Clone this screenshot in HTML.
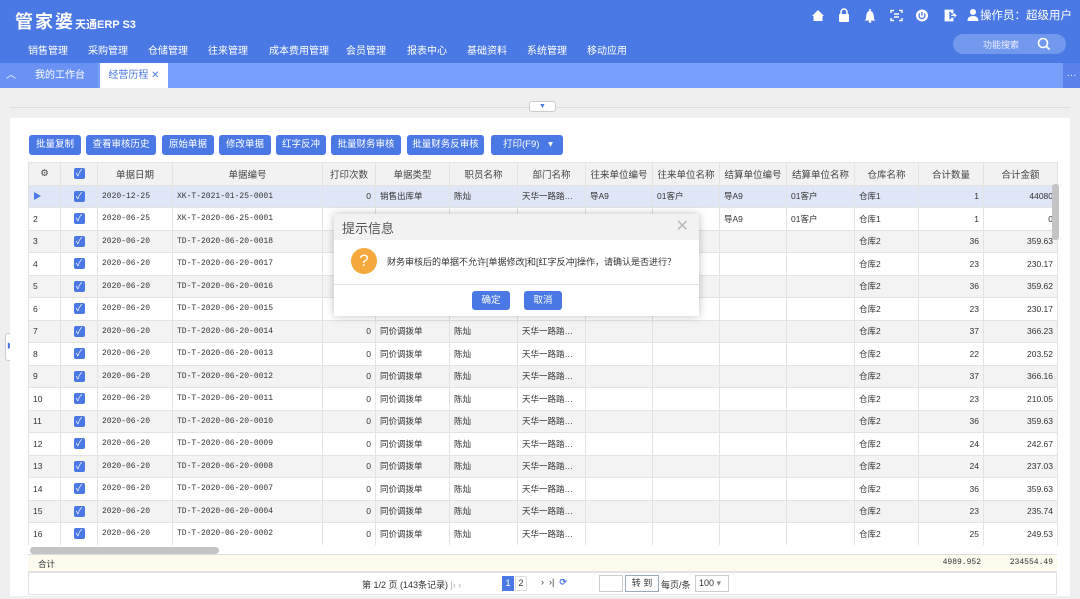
<!DOCTYPE html>
<html><head><meta charset="utf-8"><style>
*{margin:0;padding:0;box-sizing:border-box}
body{width:1080px;height:599px;overflow:hidden;background:#efefef;font-family:"Liberation Sans","Noto Sans CJK SC",sans-serif;font-size:10px;color:#333;position:relative}
.hdr{position:absolute;left:0;top:0;width:1080px;height:63px;background:#4a78e4;color:#fff}
.logo{position:absolute;left:15px;top:8px;font-size:18px;font-weight:bold;letter-spacing:2px}
.logo small{font-size:11px;letter-spacing:0;font-weight:bold}
.nav{position:absolute;top:42px;left:0;font-size:10px}
.nav span{position:absolute;white-space:nowrap}
.search{position:absolute;left:953px;top:34px;width:113px;height:20px;border-radius:10px;background:#7299ee;font-size:9px;color:#eef}
.tabs{position:absolute;top:63px;left:0;width:1080px;height:25px;background:#789ff9}
.tab{position:absolute;top:0;height:25px;line-height:25px;font-size:10px;color:#fff}
.panel{position:absolute;left:10px;top:118px;width:1060px;height:478px;background:#fff}
.btn{position:absolute;top:135px;height:20px;line-height:20px;background:#4a78e4;color:#fff;border-radius:3px;font-size:9.5px;text-align:center}
table{position:absolute;left:28px;top:162px;border-collapse:collapse;table-layout:fixed;width:1029px}
td{height:22.5px;border:1px solid #e3e3e3;padding:0 4px;white-space:nowrap;overflow:hidden;font-size:8.5px;color:#333}
tr.h td{background:#f2f2f2;text-align:center;font-size:9.5px;color:#444}
tr.sel td{background:#dfe6f7}
tr.g td{background:#f3f3f3}
.r{text-align:right}.c{text-align:center}
.cb{display:inline-block;width:11px;height:11px;background:#4a78e4;border-radius:2px;color:#fff;font-size:9px;line-height:11px;text-align:center;vertical-align:middle}
.mono{font-family:"Liberation Mono","Noto Sans CJK SC",monospace;font-size:8px}
.dlg{position:absolute;left:334px;top:214px;width:365px;height:102px;background:#fff;box-shadow:0 0 8px rgba(0,0,0,.25)}
</style></head><body>
<div class="hdr">
<div class="logo">管家婆<small>天通ERP S3</small></div>
<div class="nav">
<span style="left:28px">销售管理</span><span style="left:88px">采购管理</span><span style="left:148px">仓储管理</span><span style="left:208px">往来管理</span><span style="left:269px">成本费用管理</span><span style="left:346px">会员管理</span><span style="left:407px">报表中心</span><span style="left:467px">基础资料</span><span style="left:527px">系统管理</span><span style="left:587px">移动应用</span>
</div>
<svg style="position:absolute;left:0;top:0" width="980" height="30" fill="#fff">
<path d="M812 16 L818 10 L824 16 L822.5 16 L822.5 21 L813.5 21 L813.5 16 Z"/>
<rect x="839" y="14" width="10" height="8" rx="1"/><path d="M841 14 v-2 a3 3 0 0 1 6 0 v2" stroke="#fff" stroke-width="1.5" fill="none"/>
<path d="M866 19 q0-8 4-8 q4 0 4 8 l1.5 1.5 h-11 z"/><circle cx="870" cy="21.5" r="1.3"/><circle cx="870" cy="10" r="1"/>
<g stroke="#fff" stroke-width="1.4" fill="none"><path d="M891 13 v-2.5 h3 M899 10.5 h3 v2.5 M902 18 v2.5 h-3 M894 20.5 h-3 v-2.5"/><path d="M894 14 h5 M894 17 h5"/></g>
<circle cx="922" cy="15.5" r="6"/><path d="M922 12 v3.5 M919.8 13.5 a3 3 0 1 0 4.4 0" stroke="#4a78e4" stroke-width="1.3" fill="none"/>
<path d="M945 10 h4 v11 h-4 z M950 10 h3 v3 h-1.5 v-1.5 h-1.5 z M950 21 h3 v-3 h-1.5 v1.5 h-1.5 z M951 15.5 h5 l-2 -2 M956 15.5 l-2 2" stroke="#fff" stroke-width="0.8"/>
<circle cx="973" cy="12" r="3"/><path d="M967.5 21 q0-5 5.5-5 q5.5 0 5.5 5 z"/>
</svg>
<div style="position:absolute;left:980px;top:7px;font-size:11.5px;white-space:nowrap">操作员：超级用户</div>
<div class="search"><span style="position:absolute;left:30px;top:4px">功能搜索</span>
<svg style="position:absolute;left:84px;top:3px" width="14" height="14"><circle cx="6" cy="6" r="4.5" stroke="#fff" stroke-width="1.6" fill="none"/><path d="M9.5 9.5 l3 3" stroke="#fff" stroke-width="1.8"/></svg></div>
</div>
<div class="tabs">
<div class="tab" style="left:0;width:22px;background:#6a92f4;text-align:center">︿</div>
<div class="tab" style="left:22px;width:76px;background:#6a92f4;text-align:center">我的工作台</div>
<div class="tab" style="left:100px;width:68px;background:#fff;color:#4a78e4;text-align:center">经营历程 ✕</div>
<div class="tab" style="left:1063px;width:17px;background:#5a82ea;text-align:center">···</div>
</div>
<div style="position:absolute;left:10px;top:107px;width:1060px;height:1px;background:#ddd"></div>
<div style="position:absolute;left:529px;top:101px;width:27px;height:11px;background:#fff;border:1px solid #ccc;border-radius:3px;color:#4a78e4;font-size:7px;text-align:center;line-height:9px">▼</div>
<div style="position:absolute;left:5px;top:333px;width:11px;height:28px;background:#fff;border:1px solid #ccc;border-radius:3px;color:#4a78e4;font-size:7px;line-height:26px;text-align:center">▶</div>
<div class="panel"></div>
<div class="btn" style="left:29px;width:52px">批量复制</div>
<div class="btn" style="left:86px;width:70px">查看审核历史</div>
<div class="btn" style="left:162px;width:52px">原始单据</div>
<div class="btn" style="left:219px;width:52px">修改单据</div>
<div class="btn" style="left:276px;width:50px">红字反冲</div>
<div class="btn" style="left:331px;width:70px">批量财务审核</div>
<div class="btn" style="left:407px;width:77px">批量财务反审核</div>
<div class="btn" style="left:491px;width:72px;text-align:left;padding-left:12px">打印(F9) <span style="margin-left:6px">▾</span></div>
<table>
<colgroup><col style="width:32px"><col style="width:37px"><col style="width:75px"><col style="width:150px"><col style="width:53px"><col style="width:74px"><col style="width:68px"><col style="width:68px"><col style="width:67px"><col style="width:67px"><col style="width:67px"><col style="width:68px"><col style="width:64px"><col style="width:65px"><col style="width:74px"></colgroup>
<tr class="h"><td>⚙</td><td><span class="cb">✓</span></td><td>单据日期</td><td>单据编号</td><td>打印次数</td><td>单据类型</td><td>职员名称</td><td>部门名称</td><td>往来单位编号</td><td>往来单位名称</td><td>结算单位编号</td><td>结算单位名称</td><td>仓库名称</td><td>合计数量</td><td>合计金额</td></tr>
<tr class="sel"><td style="color:#4a78e4">▶</td><td class="c"><span class="cb">✓</span></td><td class="mono">2020-12-25</td><td class="mono">XK-T-2021-01-25-0001</td><td class="r">0</td><td>销售出库单</td><td>陈灿</td><td>天华一路踏…</td><td>导A9</td><td>01客户</td><td>导A9</td><td>01客户</td><td>仓库1</td><td class="r">1</td><td class="r">44080</td></tr>
<tr><td>2</td><td class="c"><span class="cb">✓</span></td><td class="mono">2020-06-25</td><td class="mono">XK-T-2020-06-25-0001</td><td class="r">0</td><td>销售出库单</td><td>陈灿</td><td>天华一路踏…</td><td>导A9</td><td>01客户</td><td>导A9</td><td>01客户</td><td>仓库1</td><td class="r">1</td><td class="r">0</td></tr>
<tr class="g"><td>3</td><td class="c"><span class="cb">✓</span></td><td class="mono">2020-06-20</td><td class="mono">TD-T-2020-06-20-0018</td><td class="r">0</td><td>同价调拨单</td><td>陈灿</td><td>天华一路踏…</td><td></td><td></td><td></td><td></td><td>仓库2</td><td class="r">36</td><td class="r">359.63</td></tr>
<tr><td>4</td><td class="c"><span class="cb">✓</span></td><td class="mono">2020-06-20</td><td class="mono">TD-T-2020-06-20-0017</td><td class="r">0</td><td>同价调拨单</td><td>陈灿</td><td>天华一路踏…</td><td></td><td></td><td></td><td></td><td>仓库2</td><td class="r">23</td><td class="r">230.17</td></tr>
<tr class="g"><td>5</td><td class="c"><span class="cb">✓</span></td><td class="mono">2020-06-20</td><td class="mono">TD-T-2020-06-20-0016</td><td class="r">0</td><td>同价调拨单</td><td>陈灿</td><td>天华一路踏…</td><td></td><td></td><td></td><td></td><td>仓库2</td><td class="r">36</td><td class="r">359.62</td></tr>
<tr><td>6</td><td class="c"><span class="cb">✓</span></td><td class="mono">2020-06-20</td><td class="mono">TD-T-2020-06-20-0015</td><td class="r">0</td><td>同价调拨单</td><td>陈灿</td><td>天华一路踏…</td><td></td><td></td><td></td><td></td><td>仓库2</td><td class="r">23</td><td class="r">230.17</td></tr>
<tr class="g"><td>7</td><td class="c"><span class="cb">✓</span></td><td class="mono">2020-06-20</td><td class="mono">TD-T-2020-06-20-0014</td><td class="r">0</td><td>同价调拨单</td><td>陈灿</td><td>天华一路踏…</td><td></td><td></td><td></td><td></td><td>仓库2</td><td class="r">37</td><td class="r">366.23</td></tr>
<tr><td>8</td><td class="c"><span class="cb">✓</span></td><td class="mono">2020-06-20</td><td class="mono">TD-T-2020-06-20-0013</td><td class="r">0</td><td>同价调拨单</td><td>陈灿</td><td>天华一路踏…</td><td></td><td></td><td></td><td></td><td>仓库2</td><td class="r">22</td><td class="r">203.52</td></tr>
<tr class="g"><td>9</td><td class="c"><span class="cb">✓</span></td><td class="mono">2020-06-20</td><td class="mono">TD-T-2020-06-20-0012</td><td class="r">0</td><td>同价调拨单</td><td>陈灿</td><td>天华一路踏…</td><td></td><td></td><td></td><td></td><td>仓库2</td><td class="r">37</td><td class="r">366.16</td></tr>
<tr><td>10</td><td class="c"><span class="cb">✓</span></td><td class="mono">2020-06-20</td><td class="mono">TD-T-2020-06-20-0011</td><td class="r">0</td><td>同价调拨单</td><td>陈灿</td><td>天华一路踏…</td><td></td><td></td><td></td><td></td><td>仓库2</td><td class="r">23</td><td class="r">210.05</td></tr>
<tr class="g"><td>11</td><td class="c"><span class="cb">✓</span></td><td class="mono">2020-06-20</td><td class="mono">TD-T-2020-06-20-0010</td><td class="r">0</td><td>同价调拨单</td><td>陈灿</td><td>天华一路踏…</td><td></td><td></td><td></td><td></td><td>仓库2</td><td class="r">36</td><td class="r">359.63</td></tr>
<tr><td>12</td><td class="c"><span class="cb">✓</span></td><td class="mono">2020-06-20</td><td class="mono">TD-T-2020-06-20-0009</td><td class="r">0</td><td>同价调拨单</td><td>陈灿</td><td>天华一路踏…</td><td></td><td></td><td></td><td></td><td>仓库2</td><td class="r">24</td><td class="r">242.67</td></tr>
<tr class="g"><td>13</td><td class="c"><span class="cb">✓</span></td><td class="mono">2020-06-20</td><td class="mono">TD-T-2020-06-20-0008</td><td class="r">0</td><td>同价调拨单</td><td>陈灿</td><td>天华一路踏…</td><td></td><td></td><td></td><td></td><td>仓库2</td><td class="r">24</td><td class="r">237.03</td></tr>
<tr><td>14</td><td class="c"><span class="cb">✓</span></td><td class="mono">2020-06-20</td><td class="mono">TD-T-2020-06-20-0007</td><td class="r">0</td><td>同价调拨单</td><td>陈灿</td><td>天华一路踏…</td><td></td><td></td><td></td><td></td><td>仓库2</td><td class="r">36</td><td class="r">359.63</td></tr>
<tr class="g"><td>15</td><td class="c"><span class="cb">✓</span></td><td class="mono">2020-06-20</td><td class="mono">TD-T-2020-06-20-0004</td><td class="r">0</td><td>同价调拨单</td><td>陈灿</td><td>天华一路踏…</td><td></td><td></td><td></td><td></td><td>仓库2</td><td class="r">23</td><td class="r">235.74</td></tr>
<tr><td>16</td><td class="c"><span class="cb">✓</span></td><td class="mono">2020-06-20</td><td class="mono">TD-T-2020-06-20-0002</td><td class="r">0</td><td>同价调拨单</td><td>陈灿</td><td>天华一路踏…</td><td></td><td></td><td></td><td></td><td>仓库2</td><td class="r">25</td><td class="r">249.53</td></tr>
</table>
<div style="position:absolute;left:1052px;top:184px;width:7px;height:56px;background:#c4c4c4;border-radius:3px"></div>
<div style="position:absolute;left:28px;top:545px;width:1029px;height:10px;background:#fff;border-bottom:1px solid #ddd"></div>
<div style="position:absolute;left:30px;top:547px;width:189px;height:7px;background:#c4c4c4;border-radius:4px"></div>
<div style="position:absolute;left:28px;top:555px;width:1029px;height:17px;background:#fdfaee;border-bottom:1px solid #e3e3e3;font-size:8.5px">
<span style="position:absolute;left:10px;top:3px">合计</span><span style="position:absolute;right:76px;top:3px" class="mono">4989.952</span><span style="position:absolute;right:4px;top:3px" class="mono">234554.49</span></div>
<div style="position:absolute;left:28px;top:572px;width:1029px;height:23px;border:1px solid #e3e3e3;background:#fff;font-size:9px">
<span style="position:absolute;left:333px;top:5px">第 1/2 页 (143条记录) <span style="color:#aaa">|‹ ‹</span></span>
<span style="position:absolute;left:473px;top:3px;width:12px;height:15px;background:#4a78e4;color:#fff;text-align:center;line-height:15px">1</span>
<span style="position:absolute;left:486px;top:3px;width:12px;height:15px;border:1px solid #ddd;text-align:center;line-height:13px">2</span>
<span style="position:absolute;left:512px;top:4px">›&nbsp;&nbsp;›|&nbsp;&nbsp;<b style="color:#4a78e4">⟳</b></span>
<span style="position:absolute;left:570px;top:2px;width:24px;height:17px;border:1px solid #ccc"></span>
<span style="position:absolute;left:596px;top:2px;width:34px;height:17px;border:1px solid #9ab;text-align:center;line-height:15px">转 到</span>
<span style="position:absolute;left:632px;top:5px">每页/条</span>
<span style="position:absolute;left:666px;top:2px;width:34px;height:17px;border:1px solid #ccc;line-height:15px;padding-left:3px">100 <span style="color:#888">▾</span></span>
</div>
<div class="dlg">
<div style="height:26px;background:#f2f2f2;font-size:13px;color:#555;padding:4px 8px">提示信息<span style="position:absolute;right:10px;top:2px;color:#bbb;font-size:16px">✕</span></div>
<div style="position:absolute;left:17px;top:34px;width:26px;height:26px;border-radius:50%;background:#f5a93c;color:#fff;font-size:17px;text-align:center;line-height:26px">?</div>
<div style="position:absolute;left:53px;top:41px;font-size:9px;color:#333;white-space:nowrap">财务审核后的单据不允许[单据修改]和[红字反冲]操作，请确认是否进行？</div>
<div style="position:absolute;left:0;top:70px;width:365px;height:1px;background:#e5e5e5"></div>
<div style="position:absolute;left:138px;top:77px;width:38px;height:19px;background:#4a78e4;border-radius:3px;color:#fff;text-align:center;line-height:19px;font-size:9.5px">确定</div>
<div style="position:absolute;left:190px;top:77px;width:38px;height:19px;background:#4a78e4;border-radius:3px;color:#fff;text-align:center;line-height:19px;font-size:9.5px">取消</div>
</div>
</body></html>
